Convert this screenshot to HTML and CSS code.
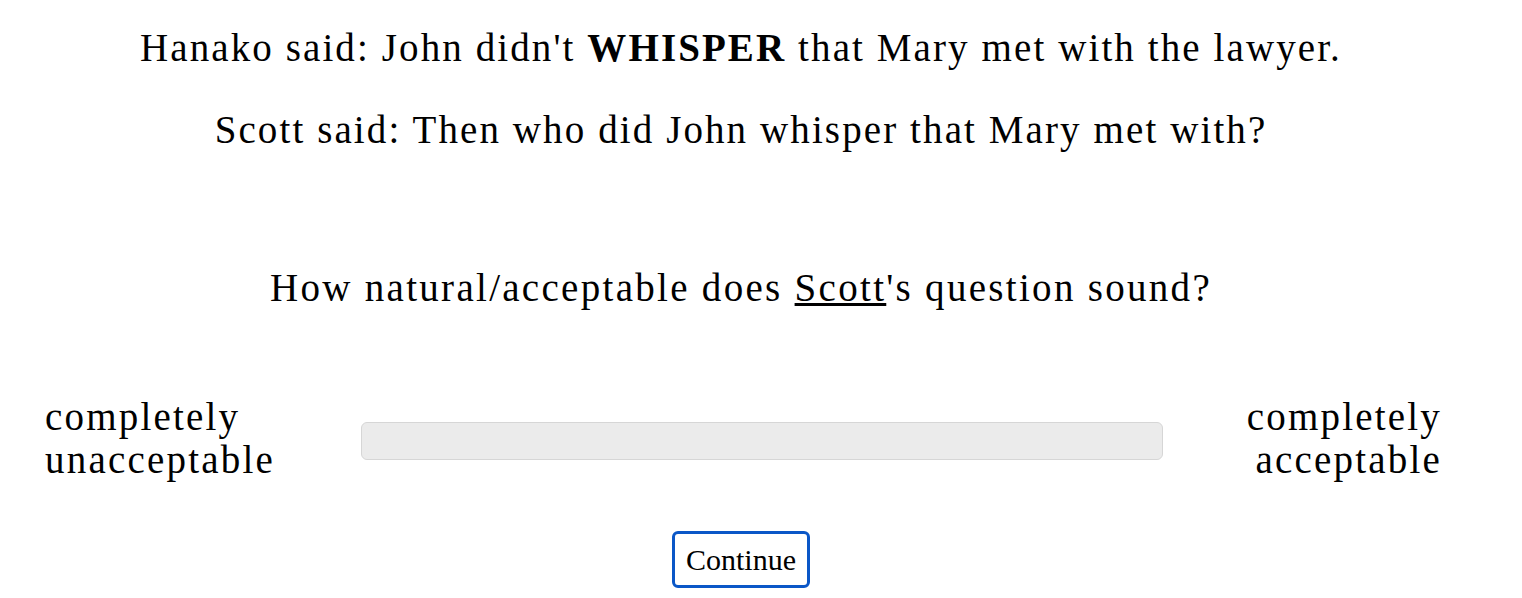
FILE: index.html
```html
<!DOCTYPE html>
<html>
<head>
<meta charset="utf-8">
<link rel="stylesheet" href="styles.css">
</head>
<body>
<div class="page">
  <div class="stimulus">
    <p class="line">Hanako said: John didn't <b>WHISPER</b> that Mary met with the lawyer.</p>
    <p class="line">Scott said: Then who did John whisper that Mary met with?</p>
  </div>
  <p class="prompt">How natural/acceptable does <u>Scott</u>'s question sound?</p>
  <div class="scale">
    <div class="label left">completely<br>unacceptable</div>
    <div class="track"></div>
    <div class="label right">completely<br>acceptable</div>
  </div>
  <div class="actions">
    <button class="btn">Continue</button>
  </div>
</div>
</body>
</html>
```
FILE: styles.css
```css
html, body {
  margin: 0;
  padding: 0;
  background: #fff;
}
body {
  font-family: "Liberation Serif", serif;
  color: #000;
}
.page {
  width: 1522px;
  display: flex;
  flex-direction: column;
}
.stimulus, .prompt, .actions {
  padding-right: 40px;
}
.line {
  margin: 0;
  text-align: center;
  font-size: 39px;
  letter-spacing: 2.1px;
  line-height: 82px;
}
.stimulus {
  padding-top: 7px;
}
.prompt {
  margin: 76px 0 0;
  text-align: center;
  font-size: 39px;
  letter-spacing: 2.3px;
  line-height: 82px;
}
.scale {
  display: grid;
  grid-template-columns: 316px 802px 277px;
  align-items: center;
  margin-top: 66px;
  padding-left: 45px;
}
.label {
  font-size: 39px;
  letter-spacing: 2.2px;
  line-height: 43px;
  white-space: nowrap;
}
.label.right {
  text-align: right;
  margin-right: -2px;
}
.track {
  height: 36px;
  background: #ebebeb;
  border: 1px solid #d6d6d6;
  border-radius: 6px;
  margin-top: 6px;
}
.actions {
  display: flex;
  justify-content: center;
  margin-top: 50px;
}
.btn {
  font-family: "Liberation Serif", serif;
  font-size: 30px;
  color: #000;
  background: #fff;
  border: 3px solid #0b57c7;
  border-radius: 6px;
  width: 138px;
  height: 57px;
  padding: 0;
}
```
